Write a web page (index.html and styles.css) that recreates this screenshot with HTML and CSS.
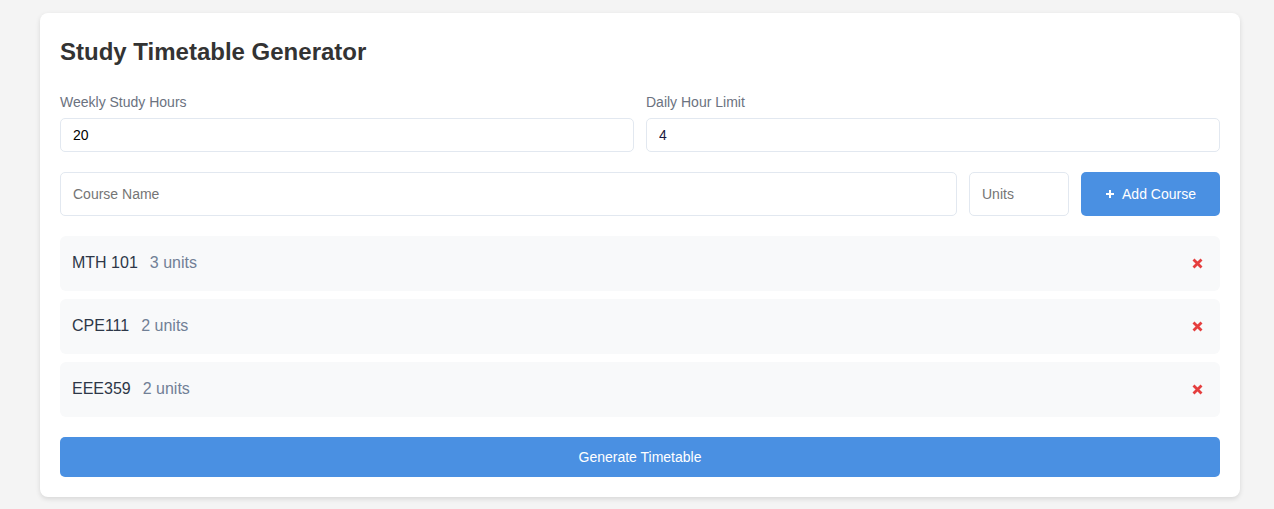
FILE: index.html
```html
<!DOCTYPE html>
<html lang="en">
<head>
    <meta charset="UTF-8">
    <meta name="viewport" content="width=device-width, initial-scale=1.0">
    <title>Study Timetable Generator</title>
    <link rel="stylesheet" href="styles.css">
</head>
<body>
    <div class="container">
        <h1>Study Timetable Generator</h1>

        <div class="settings">
            <div class="field">
                <label for="weeklyHours">Weekly Study Hours</label>
                <input id="weeklyHours" type="number" value="20">
            </div>
            <div class="field">
                <label for="dailyLimit">Daily Hour Limit</label>
                <input id="dailyLimit" type="number" value="4" class="dark">
            </div>
        </div>

        <div class="course-form">
            <input id="courseName" type="text" placeholder="Course Name" class="course-name">
            <input id="courseUnits" type="number" placeholder="Units" class="course-units">
            <button class="btn add-btn">
                <svg width="10" height="10" viewBox="0 0 10 10" class="plus"><path d="M5 1v8M1 5h8" stroke="#fff" stroke-width="2"/></svg>
                Add Course
            </button>
        </div>

        <div class="course-list">
            <div class="course-item">
                <div><span class="course-title">MTH 101</span><span class="course-unit">3 units</span></div>
                <button class="remove-btn" title="remove">
                    <svg width="11" height="11" viewBox="0 0 11 11"><path d="M1.5 1.5l8 8M9.5 1.5l-8 8" stroke="#e53e3e" stroke-width="2.8"/></svg>
                </button>
            </div>
            <div class="course-item">
                <div><span class="course-title">CPE111</span><span class="course-unit">2 units</span></div>
                <button class="remove-btn" title="remove">
                    <svg width="11" height="11" viewBox="0 0 11 11"><path d="M1.5 1.5l8 8M9.5 1.5l-8 8" stroke="#e53e3e" stroke-width="2.8"/></svg>
                </button>
            </div>
            <div class="course-item">
                <div><span class="course-title">EEE359</span><span class="course-unit">2 units</span></div>
                <button class="remove-btn" title="remove">
                    <svg width="11" height="11" viewBox="0 0 11 11"><path d="M1.5 1.5l8 8M9.5 1.5l-8 8" stroke="#e53e3e" stroke-width="2.8"/></svg>
                </button>
            </div>
        </div>

        <button class="btn generate-btn">Generate Timetable</button>
    </div>
</body>
</html>
```

FILE: styles.css
```css
body {
    font-family: "Liberation Sans", Arial, sans-serif;
    background-color: #f4f4f4;
    margin: 0;
    padding: 13px 34px 12px 40px;
}
.container {
    max-width: 1200px;
    background-color: #fff;
    padding: 20px;
    border-radius: 8px;
    box-shadow: 0 2px 5px rgba(0, 0, 0, 0.12);
    box-sizing: border-box;
}
h1 {
    margin: 0 0 23px;
    font-size: 24px;
    line-height: 38px;
    color: #333;
}
.settings {
    display: flex;
    gap: 12px;
    margin-bottom: 20px;
}
.field {
    flex: 1;
    display: flex;
    flex-direction: column;
}
label {
    font-size: 14px;
    line-height: 16px;
    color: #6b7280;
    margin-bottom: 8px;
}
input {
    font-family: inherit;
    font-size: 14px;
    line-height: 16px;
    padding: 8px 12px;
    border: 1px solid #e2e8f0;
    border-radius: 5px;
    color: #000;
    outline: none;
    box-sizing: border-box;
}
input.dark {
    color: #1a1a40;
}
input::placeholder {
    color: #757575;
}
input::-webkit-inner-spin-button {
    display: none;
}
.course-form {
    display: flex;
    gap: 12px;
    margin-bottom: 20px;
}
.course-form input {
    height: 44px;
}
.course-name {
    flex: 1;
}
.course-units {
    width: 100px;
}
.btn {
    font-family: inherit;
    background-color: #4a90e2;
    color: #fff;
    border: none;
    border-radius: 5px;
    font-size: 14px;
    cursor: pointer;
}
.add-btn {
    width: 139px;
    height: 44px;
    display: flex;
    align-items: center;
    justify-content: center;
    gap: 7px;
}
.course-list {
    display: flex;
    flex-direction: column;
    gap: 8px;
    margin-bottom: 20px;
}
.course-item {
    display: flex;
    align-items: center;
    justify-content: space-between;
    height: 55px;
    padding: 0 12px;
    background-color: #f8f9fa;
    border-radius: 6px;
}
.course-item > div {
    margin-top: -2px;
}
.course-title {
    font-size: 16px;
    color: #2d3748;
}
.course-unit {
    font-size: 16px;
    color: #718096;
    margin-left: 12px;
}
.remove-btn {
    background: none;
    border: none;
    padding: 4px 5px;
    cursor: pointer;
    display: flex;
}
.generate-btn {
    width: 100%;
    height: 40px;
    display: block;
}
```
